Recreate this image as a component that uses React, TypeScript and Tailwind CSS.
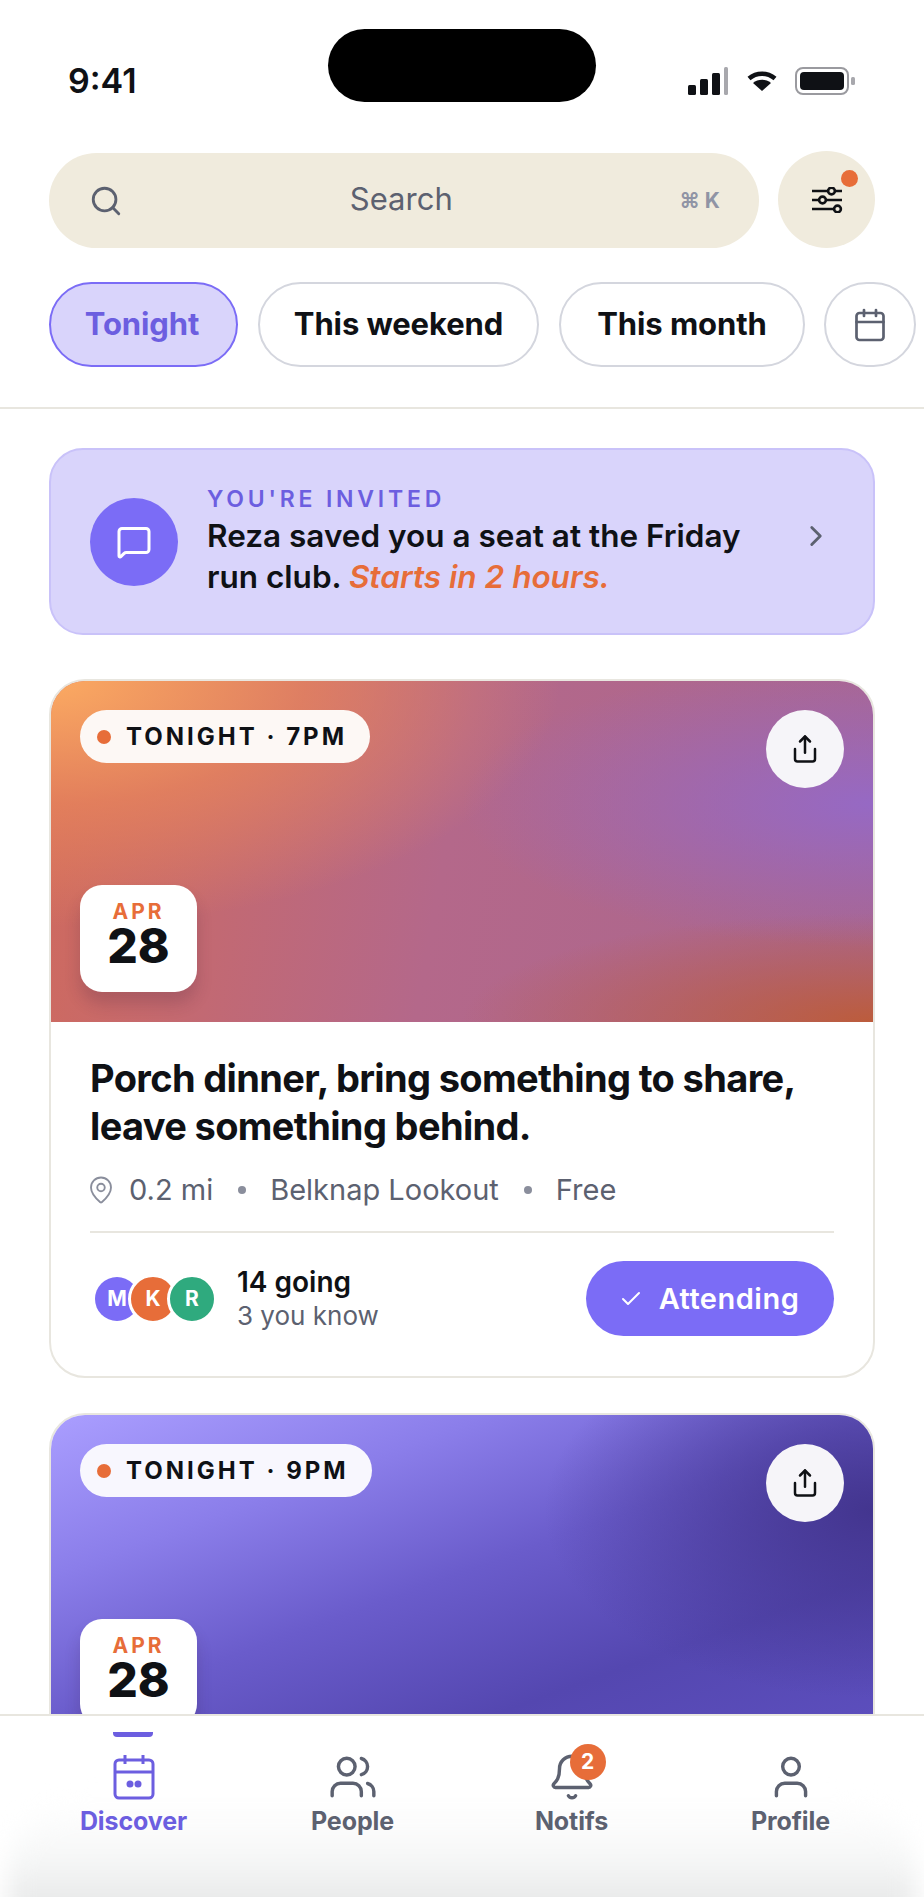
import { Bell, Calendar, Check, ChevronRight, MapPin, MessageSquare, Search, Share, User, Users } from "lucide-react";

function StatusBar() {
  return (
    <div className="flex h-[151px] shrink-0 items-start pl-[68px] pr-[69px] pt-[29px]">
      <span className="mt-[30px] w-[260px] text-[34px] leading-[44px] font-semibold text-[#0f1115]">9:41</span>
      <div className="h-[73px] w-[268px] rounded-full bg-black" />
      <div className="ml-auto mt-[38px] flex w-[168px] items-center justify-between">
        {/* signal */}
        <svg width="42" height="28" viewBox="0 0 42 28">
          <rect x="1" y="18" width="8" height="10" rx="1.5" fill="#0f1115" />
          <rect x="13" y="12" width="8" height="16" rx="1.5" fill="#0f1115" />
          <rect x="25" y="6" width="8" height="22" rx="1.5" fill="#0f1115" />
          <rect x="37" y="0" width="4" height="28" rx="1.5" fill="#a8a8ad" />
        </svg>
        {/* wifi */}
        <svg width="30" height="22" viewBox="0 0 30 22">
          <path d="M2 8.5C9.5 2 20.5 2 28 8.5" fill="none" stroke="#0f1115" strokeWidth="4.5" strokeLinejoin="round" />
          <path d="M15 21L6 13C11 8.6 19 8.6 24 13Z" fill="#0f1115" />
        </svg>
        {/* battery */}
        <svg width="60" height="28" viewBox="0 0 60 28">
          <rect x="1" y="1" width="52" height="26" rx="7" fill="none" stroke="#9a9a9f" strokeWidth="2" />
          <rect x="5" y="5" width="44" height="18" rx="4" fill="#0f1115" />
          <rect x="56" y="10" width="4" height="8" rx="1.5" fill="#a8a8ad" />
        </svg>
      </div>
    </div>
  );
}

function SearchRow() {
  return (
    <div className="flex items-end justify-between px-[49px]">
      <div className="flex h-[95px] w-[710px] items-center justify-between rounded-full bg-[#f0ebdd] pl-[40px] pr-[39px]">
        <Search size={34} strokeWidth={2} className="text-[#5c6170]" />
        <span className="mb-[4px] text-[31px] leading-none text-[#5c6170]">Search</span>
        <span className="text-[21px] leading-none font-bold text-[#9094a5]">⌘ K</span>
      </div>
      <div className="relative flex h-[97px] w-[97px] items-center justify-center rounded-full bg-[#f0ebdd]">
        <svg width="32" height="26" viewBox="0 0 32 26" fill="none" stroke="#0f1115" strokeWidth="2.6">
          <path d="M1 4H17M24 4H31M1 13H8M15 13H31M1 22H23" />
          <circle cx="20.5" cy="4" r="3.4" />
          <circle cx="11.5" cy="13" r="3.4" />
          <circle cx="26.5" cy="22" r="3.4" />
        </svg>
        <span className="absolute right-[17px] top-[19px] h-[17px] w-[17px] rounded-full bg-[#e76d39]" />
      </div>
    </div>
  );
}

function Chips() {
  return (
    <div className="mt-[34px] flex gap-[20px] pl-[49px]">
      <div className="flex h-[85px] w-[189px] items-center justify-center rounded-full border-2 border-[#7b6cf6] bg-[#d9d4fb] pr-[3px] text-[31px] font-bold tracking-[-0.1px] text-[#6c5ee0]">
        Tonight
      </div>
      <div className="flex h-[85px] w-[281px] items-center justify-center rounded-full border-2 border-[#d4d6de] text-[31px] font-bold tracking-[-0.1px] text-[#0f1115]">
        This weekend
      </div>
      <div className="flex h-[85px] w-[246px] items-center justify-center rounded-full border-2 border-[#d4d6de] text-[31px] font-bold tracking-[-0.1px] text-[#0f1115]">
        This month
      </div>
      <div className="ml-[-1px] flex h-[85px] w-[92px] items-center justify-center rounded-full border-2 border-[#d4d6de]">
        <Calendar size={36} strokeWidth={1.8} className="text-[#5c6170]" />
      </div>
    </div>
  );
}

function InviteBanner() {
  return (
    <div className="mx-[49px] flex h-[187px] items-center rounded-[34px] border-2 border-[#c9c2f9] bg-[#d9d4fb] pl-[39px] pr-[40px]">
      <div className="flex h-[88px] w-[88px] shrink-0 items-center justify-center rounded-full bg-[#7b6cf6]">
        <MessageSquare size={36} strokeWidth={2} className="text-white" />
      </div>
      <div className="ml-[29px] flex-1">
        <div className="text-[23px] leading-[24px] font-semibold tracking-[3.8px] text-[#6c5ee0]">YOU'RE INVITED</div>
        <div className="mt-[4px] text-[31.5px] leading-[41px] font-semibold text-[#0f1115]">
          Reza saved you a seat at the Friday
          <br />
          run club. <span className="italic text-[#e76d39]">Starts in 2 hours.</span>
        </div>
      </div>
      <ChevronRight size={34} strokeWidth={2} className="mb-[12px] text-[#5c6170]" />
    </div>
  );
}

function TimePill({ label, pillClass }: { label: string; pillClass: string }) {
  return (
    <div className={`flex h-[53px] items-center rounded-full pl-[17px] ${pillClass}`}>
      <span className="h-[14px] w-[14px] rounded-full bg-[#e76d39]" />
      <span className="ml-[15px] text-[24px] leading-none font-bold tracking-[3px] text-[#0f1115]">{label}</span>
    </div>
  );
}

function DateTile() {
  return (
    <div className="flex h-[107px] w-[117px] flex-col items-center rounded-[22px] bg-white pt-[17px] shadow-[0_12px_16px_rgba(60,30,60,0.2)]">
      <span className="text-[21px] leading-[20px] font-bold tracking-[3px] text-[#e76d39]">APR</span>
      <span className="mt-[3px] text-[48px] leading-[42px] font-extrabold text-[#0f1115]">28</span>
    </div>
  );
}

function ShareButton() {
  return (
    <div className="flex h-[78px] w-[78px] items-center justify-center rounded-full bg-[#f6f5f9]">
      <Share size={30} strokeWidth={2} className="text-[#0f1115]" />
    </div>
  );
}

function Avatar({ letter, color, ring }: { letter: string; color: string; ring?: boolean }) {
  return (
    <div
      className={`flex h-[44px] w-[44px] items-center justify-center rounded-full text-[21px] font-bold text-white ${color} ${
        ring ? "ml-[-11px] box-content border-[3px] border-white" : ""
      }`}
    >
      {letter}
    </div>
  );
}

function EventOne() {
  return (
    <div className="mx-[49px] mt-[44px] shrink-0 overflow-hidden rounded-[36px] border-2 border-[#e8e6df] bg-white">
      <div className="flex h-[341px] flex-col justify-between bg-[radial-gradient(ellipse_50%_42%_at_100%_36%,#9669c4_0%,rgba(150,105,196,0)_100%),radial-gradient(ellipse_50%_32%_at_100%_100%,#bc5c3c_0%,rgba(188,92,60,0)_100%),radial-gradient(ellipse_62%_72%_at_0%_0%,#fbaa62_0%,rgba(235,135,90,0.7)_50%,rgba(235,135,90,0)_100%),linear-gradient(100deg,#d06a5c_0%,#b4688a_48%,#a9668f_100%)] px-[29px] pt-[29px]">
        <div className="flex items-start justify-between">
          <TimePill label="TONIGHT · 7PM" pillClass="w-[290px] bg-[#fdf8f5]" />
          <ShareButton />
        </div>
        <div className="mb-[30px]">
          <DateTile />
        </div>
      </div>
      <div className="px-[39px] pt-[32px] pb-[40px]">
        <h2 className="text-[38px] leading-[48px] font-bold tracking-[-0.65px] text-[#0f1115]">
          Porch dinner, bring something to share,
          <br />
          leave something behind.
        </h2>
        <div className="mt-[18px] flex h-[44px] items-center text-[29px] text-[#5c6170]">
          <MapPin size={30} strokeWidth={1.5} className="ml-[-4px] text-[#8a8e9c]" />
          <span className="ml-[13px]">0.2 mi</span>
          <span className="ml-[25px] h-[8px] w-[8px] rounded-full bg-[#8a8e9c]" />
          <span className="ml-[24px]">Belknap Lookout</span>
          <span className="ml-[25px] h-[8px] w-[8px] rounded-full bg-[#8a8e9c]" />
          <span className="ml-[24px]">Free</span>
        </div>
        <div className="mt-[19px] flex items-center justify-between border-t-2 border-[#e8e6df] pt-[28px]">
          <div className="flex items-center pl-[5px]">
            <Avatar letter="M" color="bg-[#7b6cf6]" />
            <Avatar letter="K" color="bg-[#e76d39]" ring />
            <Avatar letter="R" color="bg-[#2faa7e]" ring />
            <div className="ml-[20px]">
              <div className="text-[28px] leading-[34px] font-semibold text-[#0f1115]">14 going</div>
              <div className="text-[26px] leading-[34px] text-[#5c6170]">3 you know</div>
            </div>
          </div>
          <div className="flex h-[75px] w-[248px] items-center justify-center gap-[16px] rounded-full bg-[#7b6cf6] pr-[2px] text-white">
            <Check size={24} strokeWidth={2} />
            <span className="text-[29px] font-semibold tracking-[0.5px]">Attending</span>
          </div>
        </div>
      </div>
    </div>
  );
}

function EventTwo() {
  return (
    <div className="mx-[49px] mt-[35px] shrink-0 overflow-hidden rounded-[36px] border-2 border-[#e8e6df] bg-white">
      <div className="flex h-[341px] flex-col justify-between bg-[radial-gradient(ellipse_40%_55%_at_100%_28%,#43358f_0%,rgba(67,53,143,0)_100%),linear-gradient(160deg,#aa9eff_0%,#8b7eea_25%,#6a5ccb_48%,#5447b0_72%,#5e50c0_100%)] px-[29px] pt-[29px]">
        <div className="flex items-start justify-between">
          <TimePill label="TONIGHT · 9PM" pillClass="w-[292px] bg-[#f8f7fe]" />
          <ShareButton />
        </div>
        <div className="mb-[30px]">
          <DateTile />
        </div>
      </div>
    </div>
  );
}

function NavItem({ label, active, children }: { label: string; active?: boolean; children: React.ReactNode }) {
  return (
    <div className={`flex w-[181px] flex-col items-center ${active ? "text-[#6c5ee0]" : "text-[#5c6170]"}`}>
      <div className="relative flex h-[56px] items-center justify-center">{children}</div>
      <span className="mt-[1px] text-[25px] leading-[30px] font-bold tracking-[-0.1px]">{label}</span>
    </div>
  );
}

function BottomNav() {
  return (
    <nav className="relative h-[183px] shrink-0 overflow-hidden border-t-2 border-[#e8e6df] bg-white pt-[33px]">
      <span className="absolute left-[113px] top-[16px] h-[5px] w-[40px] rounded-b-[4px] bg-[#6c5ee0]" />
      {/* soft home-indicator shade behind the tabs */}
      <div className="absolute inset-x-[8px] bottom-[-24px] h-[118px] rounded-t-[70px] bg-[linear-gradient(180deg,#ffffff_0%,#f7f8f8_45%,#e3e4e4_100%)] blur-[12px]" />
      <div className="relative flex justify-between px-[43px]">
        <NavItem label="Discover" active>
          <svg width="44" height="46" viewBox="0 0 44 46" fill="none" stroke="currentColor" strokeWidth="3">
            <rect x="3" y="6" width="38" height="38" rx="4" />
            <path d="M3 18H41M13 1V10M31 1V10" />
            <circle cx="18" cy="30" r="3.5" fill="currentColor" stroke="none" />
            <circle cx="26" cy="30" r="3.5" fill="currentColor" stroke="none" />
          </svg>
        </NavItem>
        <NavItem label="People">
          <Users size={50} strokeWidth={1.65} />
        </NavItem>
        <NavItem label="Notifs">
          <Bell size={50} strokeWidth={1.65} />
          <span className="absolute left-[23px] top-[-5px] flex h-[36px] w-[36px] items-center justify-center rounded-full bg-[#e76d39] text-[21px] font-bold text-white">
            2
          </span>
        </NavItem>
        <NavItem label="Profile">
          <User size={50} strokeWidth={1.65} />
        </NavItem>
      </div>
    </nav>
  );
}

export default function App() {
  return (
    <div className="flex h-[1897px] w-[924px] flex-col overflow-hidden bg-white font-['Inter',sans-serif]">
      <StatusBar />
      <SearchRow />
      <Chips />
      <div className="mt-[40px] h-[2px] shrink-0 bg-[#e8e6df]" />
      <main className="min-h-0 flex-1 overflow-hidden pt-[39px]">
        <InviteBanner />
        <EventOne />
        <EventTwo />
      </main>
      <BottomNav />
    </div>
  );
}
